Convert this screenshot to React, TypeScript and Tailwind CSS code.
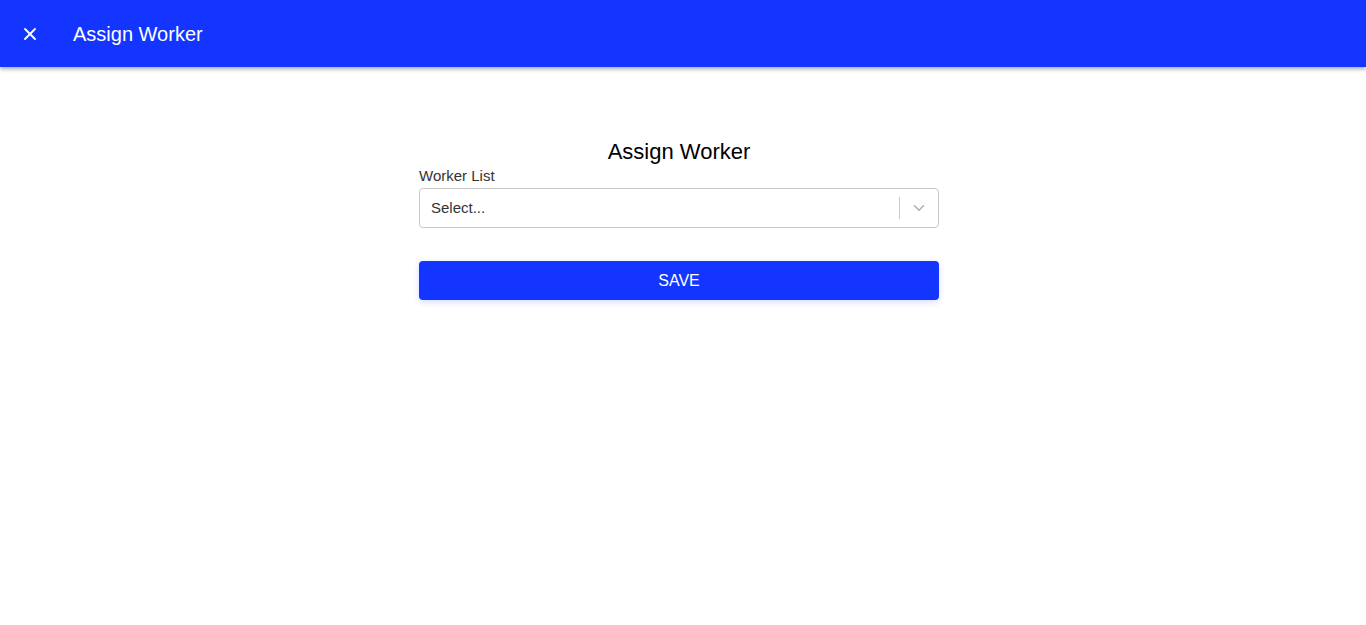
import { X, ChevronDown } from 'lucide-react'

const App = () => {
  return (
    <div className="min-h-screen bg-white font-['Liberation_Sans',Arial,sans-serif]">
      <header className="flex h-[67px] items-center bg-[#1435ff] px-[20px] text-white shadow-[0_2px_4px_rgba(0,0,0,0.35)]">
        <button type="button" className="flex h-[20px] w-[20px] items-center justify-center">
          <X className="h-[24px] w-[24px]" strokeWidth={2.2} />
        </button>
        <h1 className="ml-[33px] text-[20px] leading-none">Assign Worker</h1>
      </header>

      <div className="flex justify-center pr-[8px]">
        <main className="mt-[72px] w-[520px]">
          <h2 className="text-center text-[22px] leading-[26px] text-black">Assign Worker</h2>
          <label className="mt-[2px] block text-[15px] leading-[18px] text-[#333]">Worker List</label>
          <div className="mt-[3px] flex h-[40px] items-center rounded-[4px] border border-[#c8c8c8] bg-white">
            <span className="flex-1 pl-[11px] text-[15px] text-[#333]">Select...</span>
            <span className="h-[22px] w-px bg-[#cccccc]" />
            <span className="flex w-[38px] items-center justify-center text-[#b3b3b3]">
              <ChevronDown className="h-[18px] w-[18px]" strokeWidth={2.2} />
            </span>
          </div>
          <button
            type="button"
            className="mt-[33px] h-[39px] w-full rounded-[4px] bg-[#1435ff] text-[16px] uppercase text-white shadow-[0_2px_6px_rgba(20,53,255,0.18)]"
          >
            Save
          </button>
        </main>
      </div>
    </div>
  )
}

export default App
